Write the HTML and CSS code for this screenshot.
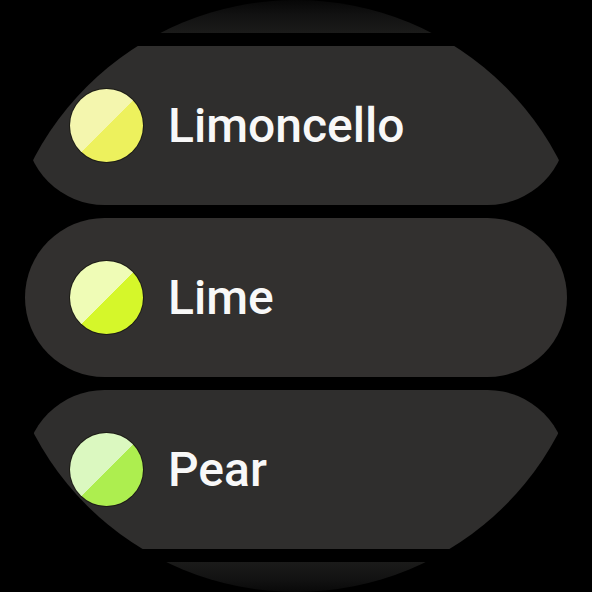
FILE: index.html
```html
<!DOCTYPE html>
<html lang="en">
<head>
<meta charset="utf-8">
<title>Colors</title>
<link rel="stylesheet" href="styles.css">
</head>
<body>
<div class="screen">
  <div class="list">
    <div class="chip chip--ghost chip--ghost-top"></div>
    <div class="chip chip--edge">
      <span class="swatch swatch--limoncello"></span>
      <span class="label">Limoncello</span>
    </div>
    <div class="chip">
      <span class="swatch swatch--lime"></span>
      <span class="label">Lime</span>
    </div>
    <div class="chip chip--edge">
      <span class="swatch swatch--pear"></span>
      <span class="label">Pear</span>
    </div>
    <div class="chip chip--ghost chip--ghost-bottom"></div>
  </div>
</div>
</body>
</html>
```
FILE: styles.css
```css
html, body {
  margin: 0;
  padding: 0;
  background: #000;
}

.screen {
  width: 592px;
  height: 592px;
  border-radius: 50%;
  overflow: hidden;
  background: #000;
}

.list {
  display: flex;
  flex-direction: column;
  gap: 13px;
  margin-top: -126px;
  padding: 0 25px;
}

.chip {
  flex: none;
  height: 159px;
  border-radius: 80px;
  background: #32302f;
  display: flex;
  align-items: center;
  gap: 25px;
  padding-left: 45px;
  box-sizing: border-box;
}

.chip--edge {
  background: #2f2e2d;
}

.chip--ghost-top {
  background: linear-gradient(to top, #1b1b1a 0%, #111 12%, #050505 22%);
}

.chip--ghost-bottom {
  background: linear-gradient(to bottom, #1b1b1a 0%, #111 12%, #050505 22%);
}

.swatch {
  flex: none;
  width: 73px;
  height: 73px;
  border-radius: 50%;
  box-shadow: 0 0 0 1px #1c1c14;
}

.swatch--limoncello {
  background: linear-gradient(to bottom right, #f4f6ae 0%, #f4f6ae 51%, #edf15d 51%, #edf15d 100%);
}

.swatch--lime {
  background: linear-gradient(to bottom right, #effcb6 0%, #effcb6 51%, #d5f72a 51%, #d5f72a 100%);
}

.swatch--pear {
  background: linear-gradient(to bottom right, #dbf8c0 0%, #dbf8c0 51%, #adee4f 51%, #adee4f 100%);
}

.label {
  font-family: Roboto, "Liberation Sans", sans-serif;
  font-size: 48px;
  font-weight: 500;
  color: #f8f8f8;
  line-height: 1.15;
}
```
